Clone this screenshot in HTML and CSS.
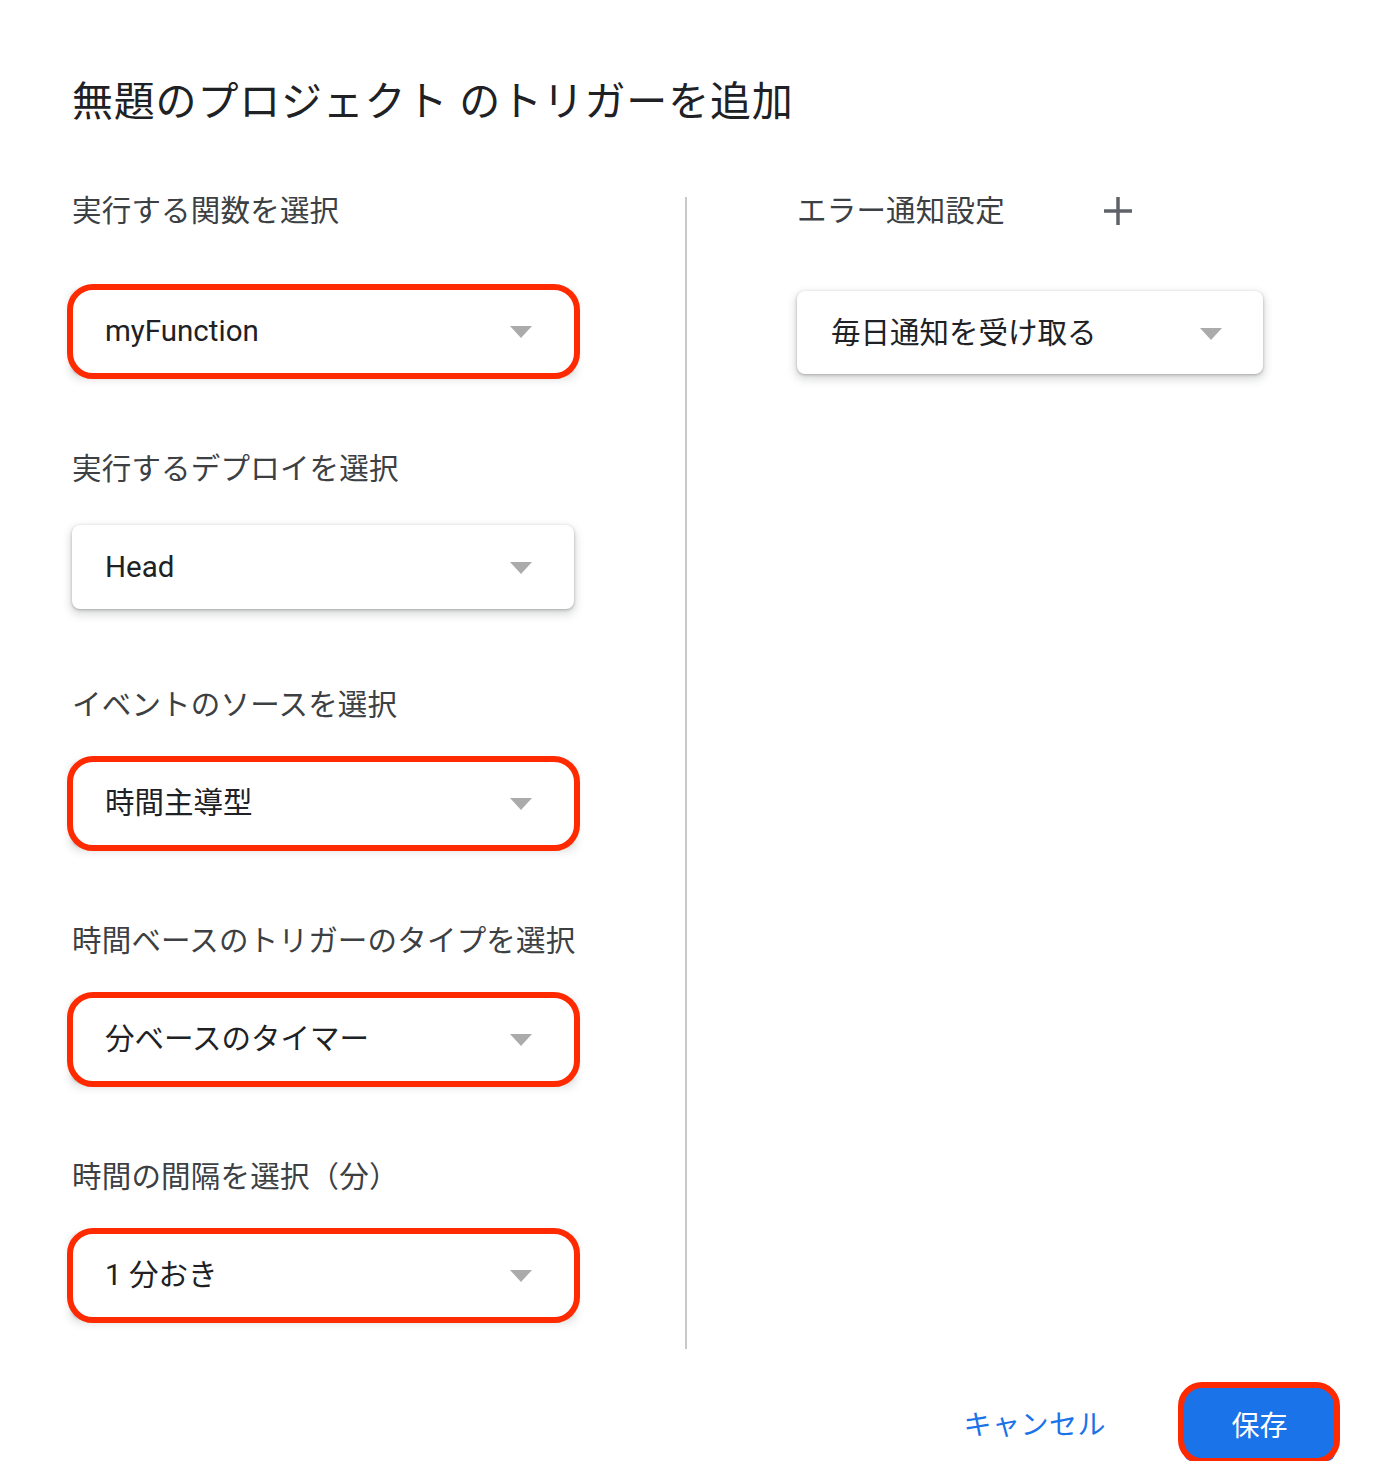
FILE: index.html
```html
<!DOCTYPE html>
<html lang="ja">
<head>
<meta charset="utf-8">
<link rel="stylesheet" href="styles.css">
</head>
<body>
<div class="dialog">
  <h1 class="title">無題のプロジェクト のトリガーを追加</h1>
  <div class="main">
    <div class="col-left">
      <div class="field first">
        <div class="label">実行する関数を選択</div>
        <div class="select marked"><span class="value">myFunction</span><span class="arrow"></span></div>
      </div>
      <div class="field">
        <div class="label">実行するデプロイを選択</div>
        <div class="select"><span class="value">Head</span><span class="arrow"></span></div>
      </div>
      <div class="field">
        <div class="label">イベントのソースを選択</div>
        <div class="select marked"><span class="value">時間主導型</span><span class="arrow"></span></div>
      </div>
      <div class="field">
        <div class="label">時間ベースのトリガーのタイプを選択</div>
        <div class="select marked"><span class="value">分ベースのタイマー</span><span class="arrow"></span></div>
      </div>
      <div class="field">
        <div class="label">時間の間隔を選択（分）</div>
        <div class="select marked"><span class="value">1 分おき</span><span class="arrow"></span></div>
      </div>
    </div>
    <div class="divider"></div>
    <div class="col-right">
      <div class="label-row">
        <div class="label">エラー通知設定</div>
        <svg class="plus" width="28" height="28" viewBox="0 0 28 28"><path d="M14 0v28M0 14h28" stroke="#5f6368" stroke-width="3.5" fill="none"/></svg>
      </div>
      <div class="select wide"><span class="value">毎日通知を受け取る</span><span class="arrow"></span></div>
    </div>
  </div>
  <div class="actions">
    <button class="btn-cancel">キャンセル</button>
    <button class="btn-save marked-btn">保存</button>
  </div>
</div>
</body>
</html>
```

FILE: styles.css
```css
* { box-sizing: border-box; }
html, body { margin: 0; padding: 0; background: #fff; }
body {
  font-family: Roboto, "Noto Sans CJK JP", sans-serif;
  color: #202124;
}
.dialog {
  width: 1379px;
  padding: 0 43px 0 72px;
}
.title {
  margin: 0;
  padding-top: 77px;
  font-size: 41px;
  line-height: 50px;
  font-weight: 400;
  color: #202124;
  letter-spacing: 0.8px;
}
.main {
  display: flex;
  margin-top: 62px;
}
.col-left {
  width: 502px;
  padding-bottom: 32px;
}
.field { margin-top: 74px; }
.field.first { margin-top: 0; }
.label {
  font-size: 29.5px;
  line-height: 40px;
  color: #3c4043;
  white-space: nowrap;
  letter-spacing: 0.2px;
  padding-top: 2px;
}
.select {
  position: relative;
  margin-top: 36px;
  height: 84px;
  border-radius: 8px;
  background: #fff;
  box-shadow: 0 1px 3px rgba(60,64,67,0.35), 0 4px 9px 2px rgba(60,64,67,0.18);
  display: flex;
  align-items: center;
  justify-content: space-between;
  padding: 0 42px 0 33px;
}
.field.first .select { margin-top: 58px; }
.value {
  font-size: 29.5px;
  line-height: 40px;
  color: #202124;
}
.arrow {
  width: 0;
  height: 0;
  border-left: 11.5px solid transparent;
  border-right: 11.5px solid transparent;
  border-top: 12px solid #ababab;
  margin-top: 2px;
}
.marked::after {
  content: "";
  position: absolute;
  top: -5px;
  left: -5px;
  right: -6px;
  bottom: -6px;
  border: 6px solid #ff2a00;
  border-radius: 26px;
  pointer-events: none;
}
.divider {
  width: 2px;
  background: #c6c8cc;
  margin: 8px 0 0 111px;
}
.col-right {
  margin-left: 110px;
  width: 466px;
}
.label-row {
  display: flex;
  align-items: center;
}
.plus { margin-left: 99px; margin-top: 2px; }
.select.wide {
  margin-top: 60px;
  height: 83px;
  padding: 0 41px 0 34px;
}
.actions {
  display: flex;
  justify-content: flex-end;
  align-items: center;
  gap: 78px;
  margin-top: 38px;
}
.btn-cancel {
  border: none;
  background: none;
  padding: 4px 0 0 0;
  font-family: Roboto, "Noto Sans CJK JP", sans-serif;
  font-size: 28px;
  line-height: 40px;
  color: #1a73e8;
  letter-spacing: 0.5px;
}
.btn-save {
  position: relative;
  border: none;
  width: 151px;
  height: 74px;
  border-radius: 8px;
  background: #1a73e8;
  color: #fff;
  font-family: Roboto, "Noto Sans CJK JP", sans-serif;
  font-size: 28px;
  padding: 0;
  margin-right: 1px;
}
.marked-btn::after {
  content: "";
  position: absolute;
  top: -5px;
  left: -6px;
  right: -5px;
  bottom: -3px;
  border: 6px solid #ff2a00;
  border-radius: 24px;
  pointer-events: none;
}
```
